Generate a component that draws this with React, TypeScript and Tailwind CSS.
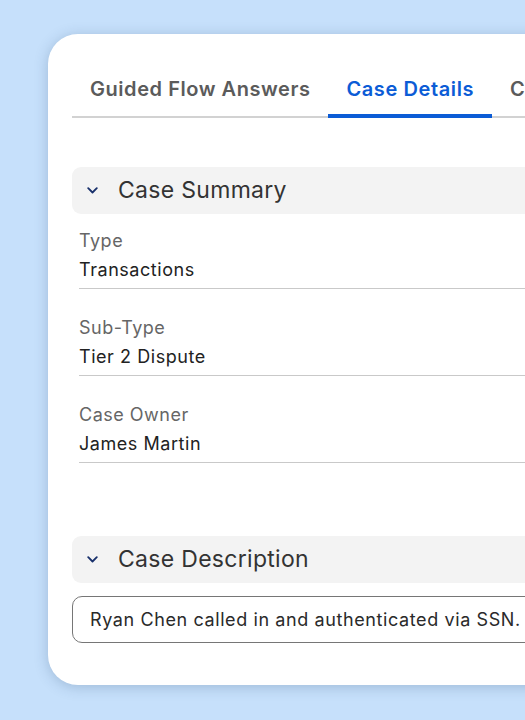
import React from "react";

type Field = { label: string; value: string };

const summaryFields: Field[] = [
  { label: "Type", value: "Transactions" },
  { label: "Sub-Type", value: "Tier 2 Dispute" },
  { label: "Case Owner", value: "James Martin" },
];

const tabs = ["Guided Flow Answers", "Case Details", "Case History"];

const Chevron = () => (
  <svg width="11" height="7" viewBox="0 0 11 7" fill="none" className="shrink-0">
    <path d="M1.2 1.2l4.3 4.3 4.3-4.3" stroke="#18306b" strokeWidth="1.8" strokeLinecap="round" strokeLinejoin="round" />
  </svg>
);

const SectionHeader: React.FC<{ title: string }> = ({ title }) => (
  <div className="flex h-[47px] items-center gap-[20px] rounded-[9px] bg-[#f3f3f3] pl-[15px]">
    <Chevron />
    <span className="text-[23px] leading-none tracking-[0.3px] text-[#333333]">{title}</span>
  </div>
);

const App: React.FC = () => {
  const active = 1;

  return (
    <div
      className="h-[720px] w-full overflow-hidden bg-[#c6e0fb] pl-[48px] pt-[34px]"
      style={{ fontFamily: "Inter, 'Noto Sans', sans-serif" }}
    >
      <div className="w-[560px] rounded-l-[30px] bg-white pb-[42px] pl-[24px] pt-[30px] shadow-[0_2px_14px_rgba(40,70,110,0.25)]">
        {/* tab strip */}
        <div className="flex border-b-2 border-[#d2d2d2]">
          {tabs.map((tab, i) => (
            <div
              key={tab}
              className={
                i === active
                  ? "-mb-[2px] flex h-[54px] shrink-0 items-center whitespace-nowrap border-b-4 border-[#0b5cd6] px-[18px] text-[20px] font-semibold tracking-[0.6px] text-[#0b5cd6]"
                  : "-mb-[2px] flex h-[54px] shrink-0 items-center whitespace-nowrap border-b-4 border-transparent px-[18px] text-[20px] font-semibold tracking-[0.55px] text-[#5b5b5b]"
              }
            >
              {tab}
            </div>
          ))}
        </div>

        <div className="mt-[49px]">
          <SectionHeader title="Case Summary" />
          <div className="ml-[7px] mt-[15px] flex flex-col gap-[27px]">
            {summaryFields.map((f) => (
              <div key={f.label} className="border-b border-[#c9c9c9] pb-[6px]">
                <div className="text-[18px] leading-[24px] tracking-[0.5px] text-[#666666]">{f.label}</div>
                <div className="mt-[5px] text-[18px] leading-[24px] tracking-[0.55px] text-[#222222]">{f.value}</div>
              </div>
            ))}
          </div>
        </div>

        <div className="mt-[73px]">
          <SectionHeader title="Case Description" />
          <div className="mt-[13px] flex h-[47px] items-center whitespace-nowrap rounded-[10px] border border-[#767676] px-[17px] text-[18px] tracking-[0.6px] text-[#2a2a2a]">
            Ryan Chen called in and authenticated via SSN. He reported an unauthorized charge
          </div>
        </div>
      </div>
    </div>
  );
};

export default App;
